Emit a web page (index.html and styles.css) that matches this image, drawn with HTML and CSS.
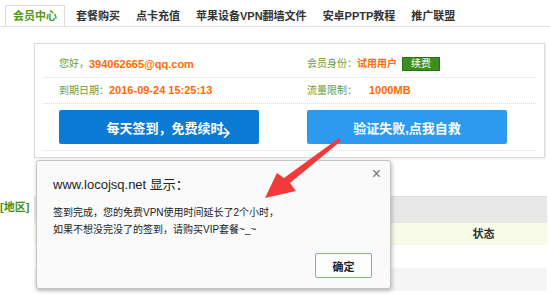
FILE: index.html
```html
<!DOCTYPE html>
<html lang="zh-CN">
<head>
  <meta charset="UTF-8">
  <title>会员中心</title>
  <link rel="stylesheet" href="styles.css">
</head>
<body>
    <div class="tabs">
        <a class="tab active">会员中心</a>
        <a class="tab">套餐购买</a>
        <a class="tab">点卡充值</a>
        <a class="tab">苹果设备VPN翻墙文件</a>
        <a class="tab">安卓PPTP教程</a>
        <a class="tab">推广联盟</a>
    </div>

    <div class="panel">
        <div class="row first">
            <div class="cell"><span class="label">您好，</span><span class="value">394062665@qq.com</span></div>
            <div class="cell"><span class="label">会员身份：</span><span class="value cn">试用用户</span><span class="renew">续费</span></div>
        </div>
        <div class="row">
            <div class="cell"><span class="label">到期日期：</span><span class="value">2016-09-24 15:25:13</span></div>
            <div class="cell"><span class="label">流量限制：</span><span class="value gap">1000MB</span></div>
        </div>
        <div class="row buttons">
            <div class="cell">
                <button class="btn btn-sign">每天签到，免费续时
                    <svg class="cursor" width="12" height="12" viewBox="0 0 12 12">
                        <path d="M0 7 H9 M5 2 L10 7 L5 12" fill="none" stroke="#fff" stroke-width="1.6"/>
                    </svg>
                </button>
            </div>
            <div class="cell"><button class="btn btn-help">验证失败,点我自救</button></div>
        </div>
    </div>

    <div class="region">
        <div class="region-label">[地区]</div>
        <div class="table">
            <div class="tr head"><div class="td"></div><div class="td"></div></div>
            <div class="tr sub"><div class="td"></div><div class="td status">状态</div></div>
            <div class="tr"><div class="td"></div><div class="td"></div></div>
            <div class="tr odd"><div class="td"></div><div class="td"></div></div>
        </div>
    </div>

    <div class="dialog">
        <div class="dialog-title">www.locojsq.net 显示：</div>
        <span class="dialog-close">×</span>
        <div class="dialog-text">签到完成，您的免费VPN使用时间延长了2个小时，<br>如果不想没完没了的签到，请购买VIP套餐~_~</div>
        <div class="dialog-footer"><button class="dialog-ok">确定</button></div>
    </div>

    <!-- red annotation arrow -->
    <svg class="arrow" width="90" height="70" viewBox="0 0 90 70">
        <polygon points="81,2 83,5 32,47 38,55 7,62 19,37 26,42" fill="#f23a3a"/>
    </svg>
</body>
</html>
```

FILE: styles.css
```css
body {
    font-family: "Liberation Sans", "Noto Sans CJK SC", sans-serif;
    font-size: 11px;
    color: #333;
    background: #fff;
    margin: 0;
    width: 550px;
    height: 294px;
    overflow: hidden;
    position: relative;
}
.tabs {
    display: flex;
    margin-top: 6px;
    padding-left: 5px;
    border-bottom: 1px solid #e4e4e4;
    height: 20px;
}
.tab {
    padding: 0 8px;
    line-height: 20px;
    font-weight: bold;
    color: #333;
    white-space: nowrap;
}
.tab.active {
    color: #4f9a10;
    border: 1px solid #dcdcdc;
    border-bottom: none;
    background: #fff;
    height: 20px;
    line-height: 20px;
    padding: 0 7px;
    margin-top: -1px;
    margin-right: 3px;
}
.panel {
    margin: 16px 0 0 34px;
    width: 493px;
    padding: 0 8px;
    border: 1px solid #dadada;
    box-shadow: 1px 1px 2px rgba(0, 0, 0, 0.08);
}
.row {
    display: grid;
    grid-template-columns: 248px 1fr;
    border-bottom: 1px dotted #f3d9a6;
    height: 25px;
    line-height: 25px;
}
.row.first {
    height: 26px;
    padding-top: 7px;
    line-height: 26px;
}
.row.buttons {
    height: 34px;
    padding: 6px 0;
    margin-bottom: 6px;
}
.cell {
    padding-left: 16px;
    display: flex;
    align-items: center;
}
.label {
    color: #6e9a32;
    font-size: 10px;
}
.value {
    color: #ff6a00;
    font-weight: bold;
}
.value.cn {
    font-size: 10px;
}
.value.gap {
    margin-left: 12px;
}
.renew {
    margin-left: 5px;
    background: #3b8f1d;
    border: 1px solid #2a6d12;
    color: #fff;
    font-size: 10px;
    line-height: 12px;
    padding: 0 8px;
}
.btn {
    position: relative;
    width: 200px;
    height: 34px;
    border: none;
    border-radius: 2px;
    color: #fff;
    font-family: "Liberation Sans", "Noto Sans CJK SC", sans-serif;
    font-size: 13px;
    font-weight: bold;
    cursor: pointer;
}
.btn-sign {
    background: #0b7ad5;
    padding-left: 18px;
}
.btn-help {
    background: #2c9bef;
}
.cursor {
    position: absolute;
    left: 160px;
    top: 16px;
}
.region {
    display: flex;
    margin-top: 38px;
}
.region-label {
    width: 34px;
    color: #3f8f10;
    font-weight: bold;
    padding-top: 4px;
    line-height: 14px;
}
.table {
    width: 513px;
}
.tr {
    display: grid;
    grid-template-columns: 1fr 127px;
    height: 23px;
    line-height: 23px;
}
.tr.head {
    height: 26px;
    background: #e8e8e8;
    border-top: 1px solid #ddd;
}
.tr.sub {
    height: 22px;
    line-height: 22px;
    background: #f7fbe7;
}
.tr.odd {
    background: #f5f5f5;
}
.status {
    text-align: center;
    font-weight: bold;
}
.dialog {
    position: absolute;
    left: 36px;
    top: 160px;
    width: 337px;
    height: 127px;
    padding: 0 0 0 16px;
    background: #fafafa;
    border: 1px solid #c4c4c4;
    border-radius: 3px;
    box-shadow: 1px 2px 4px rgba(0, 0, 0, 0.25);
}
.dialog-title {
    margin-top: 15px;
    font-size: 13px;
    line-height: 18px;
    color: #222;
}
.dialog-close {
    position: absolute;
    right: 9px;
    top: 4px;
    font-size: 16px;
    color: #777;
}
.dialog-text {
    margin-top: 10px;
    font-size: 10px;
    line-height: 17px;
    color: #222;
}
.dialog-footer {
    display: flex;
    justify-content: flex-end;
    padding-right: 18px;
    margin-top: 15px;
}
.dialog-ok {
    width: 57px;
    height: 25px;
    background: #fdfdfd;
    border: 1px solid #7ea6e6;
    border-radius: 2px;
    font-family: "Liberation Sans", "Noto Sans CJK SC", sans-serif;
    font-size: 11px;
    font-weight: bold;
    color: #222;
}
.arrow {
    position: absolute;
    left: 258px;
    top: 136px;
}
```
